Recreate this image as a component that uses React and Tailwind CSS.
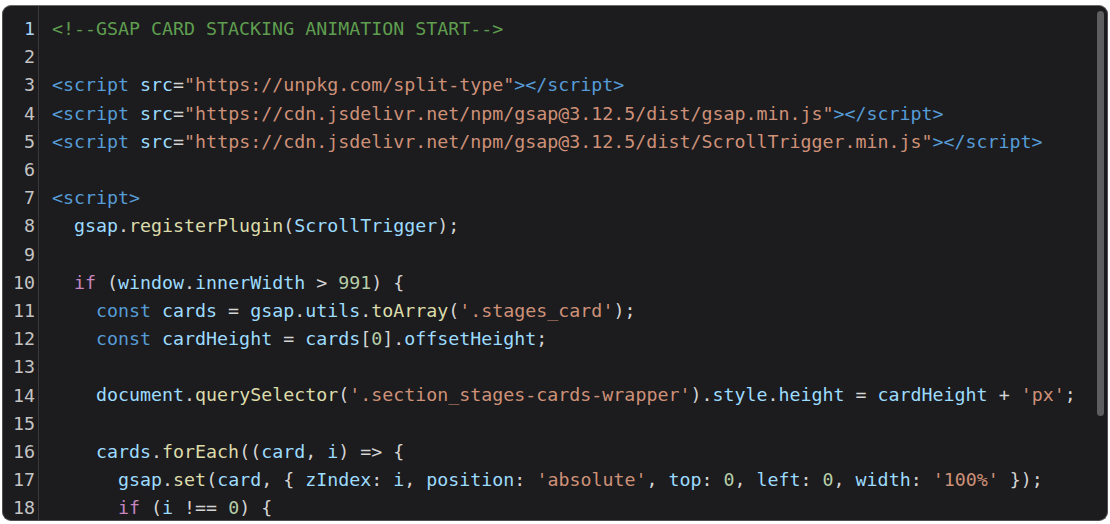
import React from "react";

// token colours, VS Code dark-ish
const C = {
  cm: "text-[#5f9e4f]",
  tag: "text-[#569cd6]",
  at: "text-[#9cdcfe]",
  str: "text-[#ce9178]",
  fn: "text-[#dcdcaa]",
  v: "text-[#9cdcfe]",
  kw: "text-[#569cd6]",
  ctl: "text-[#c586c0]",
  num: "text-[#b5cea8]",
  p: "text-[#d4d4d4]",
};

const lines = [
  [["<!--GSAP CARD STACKING ANIMATION START-->", "cm"]],
  [],
  [["<script ", "tag"], ["src", "at"], ["=", "p"], ['"https://unpkg.com/split-type"', "str"], ["></script>", "tag"]],
  [["<script ", "tag"], ["src", "at"], ["=", "p"], ['"https://cdn.jsdelivr.net/npm/gsap@3.12.5/dist/gsap.min.js"', "str"], ["></script>", "tag"]],
  [["<script ", "tag"], ["src", "at"], ["=", "p"], ['"https://cdn.jsdelivr.net/npm/gsap@3.12.5/dist/ScrollTrigger.min.js"', "str"], ["></script>", "tag"]],
  [],
  [["<script>", "tag"]],
  [["  ", "p"], ["gsap", "v"], [".", "p"], ["registerPlugin", "fn"], ["(", "p"], ["ScrollTrigger", "v"], [");", "p"]],
  [],
  [["  ", "p"], ["if", "ctl"], [" (", "p"], ["window", "v"], [".", "p"], ["innerWidth", "v"], [" > ", "p"], ["991", "num"], [") {", "p"]],
  [["    ", "p"], ["const", "kw"], [" ", "p"], ["cards", "v"], [" = ", "p"], ["gsap", "v"], [".", "p"], ["utils", "v"], [".", "p"], ["toArray", "fn"], ["(", "p"], ["'.stages_card'", "str"], [");", "p"]],
  [["    ", "p"], ["const", "kw"], [" ", "p"], ["cardHeight", "v"], [" = ", "p"], ["cards", "v"], ["[", "p"], ["0", "num"], ["].", "p"], ["offsetHeight", "v"], [";", "p"]],
  [],
  [["    ", "p"], ["document", "v"], [".", "p"], ["querySelector", "fn"], ["(", "p"], ["'.section_stages-cards-wrapper'", "str"], [").", "p"], ["style", "v"], [".", "p"], ["height", "v"], [" = ", "p"], ["cardHeight", "v"], [" + ", "p"], ["'px'", "str"], [";", "p"]],
  [],
  [["    ", "p"], ["cards", "v"], [".", "p"], ["forEach", "fn"], ["((", "p"], ["card", "v"], [", ", "p"], ["i", "v"], [") => {", "p"]],
  [["      ", "p"], ["gsap", "v"], [".", "p"], ["set", "fn"], ["(", "p"], ["card", "v"], [", { ", "p"], ["zIndex", "v"], [": ", "p"], ["i", "v"], [", ", "p"], ["position", "v"], [": ", "p"], ["'absolute'", "str"], [", ", "p"], ["top", "v"], [": ", "p"], ["0", "num"], [", ", "p"], ["left", "v"], [": ", "p"], ["0", "num"], [", ", "p"], ["width", "v"], [": ", "p"], ["'100%'", "str"], [" });", "p"]],
  [["      ", "p"], ["if", "ctl"], [" (", "p"], ["i", "v"], [" !== ", "p"], ["0", "num"], [") {", "p"]],
];

export default function App() {
  return (
    <div className="w-[1110px] h-[524px] bg-white pt-[5px] pl-[2px] pr-[2px] pb-[3px]">
      <div className="relative h-full flex rounded-[9px] border border-[#505050] border-t-[#6a6a6a] bg-[#1c1b1e] overflow-hidden font-['DejaVu_Sans_Mono',monospace] text-[18.3px] leading-[28.2px]">
        <div className="w-[36px] shrink-0 border-r border-[#3a3a3c] pt-[9px] pr-[3px] text-right">
          {lines.map((_, i) => (
            <div key={i} className={i === 0 ? "text-[#a8d4f5]" : "text-[#c4c4c4]"}>
              {i + 1}
            </div>
          ))}
        </div>
        <div className="flex-1 pt-[9px] pl-[13px] whitespace-pre">
          {lines.map((toks, i) => (
            <div key={i} className="h-[28.2px]">
              {toks.map(([t, k], j) => (
                <span key={j} className={C[k]}>
                  {t}
                </span>
              ))}
            </div>
          ))}
        </div>
        <div className="absolute right-[3px] top-[5px] w-[7px] h-[405px] rounded-full bg-[#5e5e60]" />
      </div>
    </div>
  );
}
